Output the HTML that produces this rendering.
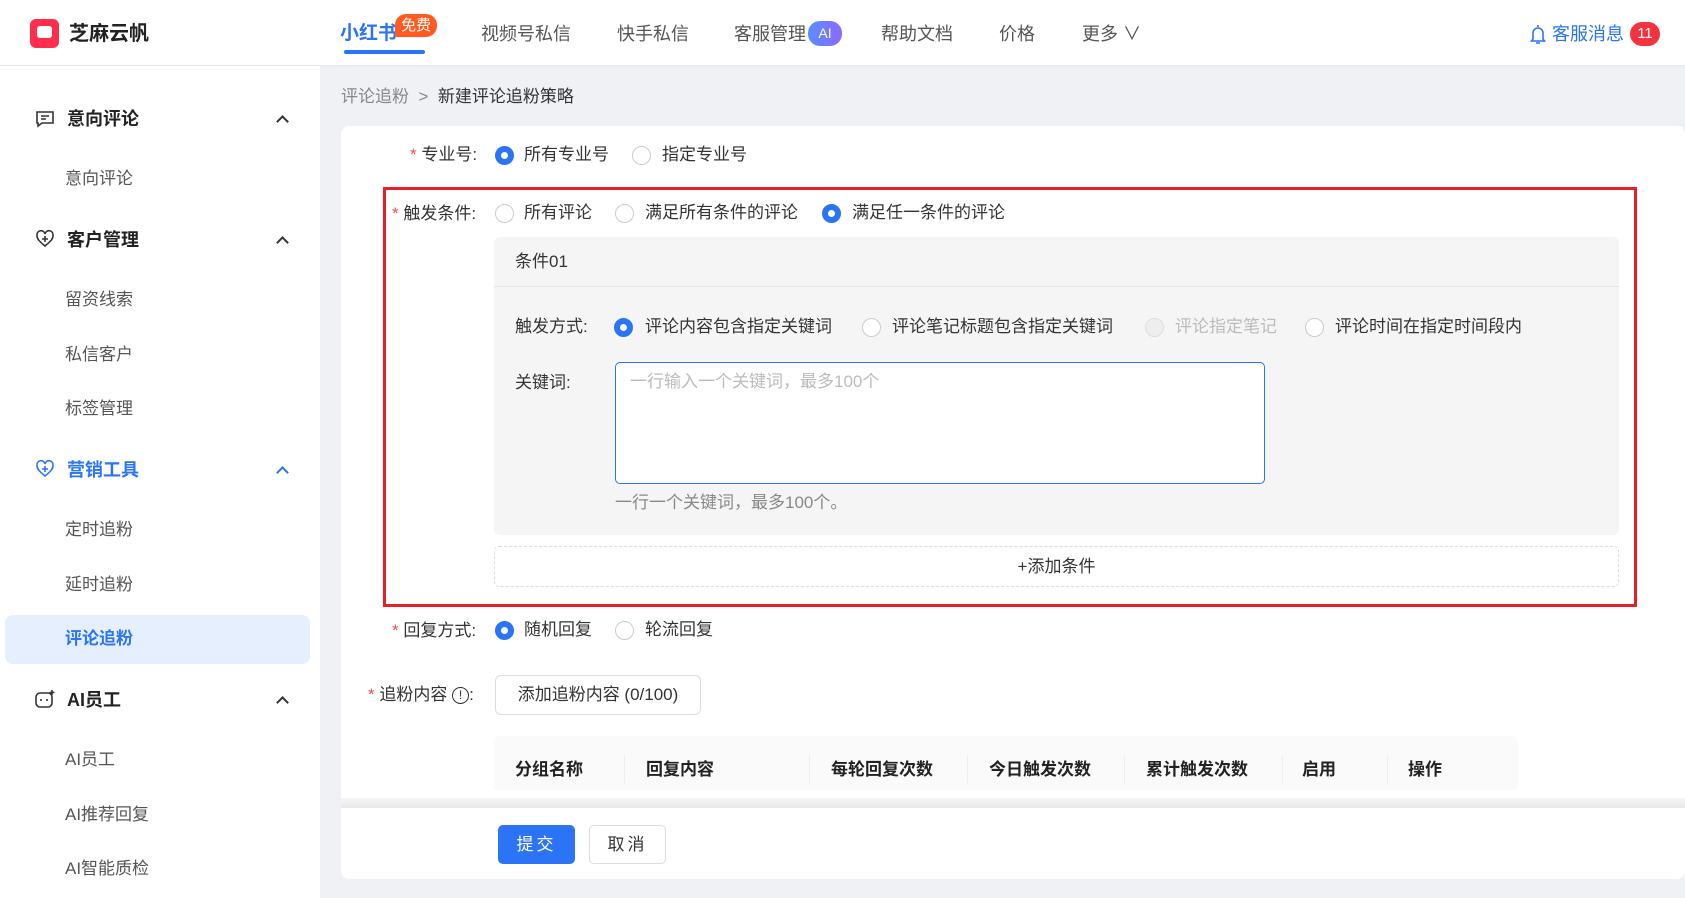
<!DOCTYPE html><html><head><meta charset="utf-8"><style>
*{margin:0;padding:0;box-sizing:border-box}
body{width:1685px;height:898px;overflow:hidden;background:#f0f1f5;font-family:"Liberation Sans","Noto Sans CJK SC",sans-serif;font-size:17px;color:#333;position:relative}
.a{position:absolute;white-space:nowrap;line-height:24px}
.hdr{position:absolute;left:0;top:0;width:1685px;height:66px;background:#fff;border-bottom:1px solid #e5e6eb}
.side{position:absolute;left:0;top:66px;width:320px;height:832px;background:#fff}
.g{font-weight:bold;color:#222;font-size:18px}
.sub{color:#555}
.r{position:absolute;width:19px;height:19px;border-radius:50%;border:1px solid #ccc;background:#fff}
.r.on{border:6px solid #2a74f5}
.r.dis{background:#eee;border-color:#ddd}
.star{color:#f04c4c}
.chev{position:absolute;width:9px;height:9px;border-left:2px solid #333;border-top:2px solid #333;transform:rotate(45deg)}
</style></head><body>
<div class="hdr"></div>
<div class="a" style="left:30px;top:19px;width:29px;height:29px;background:#ff2e4d;border-radius:6px;"></div>
<div class="a" style="left:37px;top:26px;width:15px;height:12px;background:#fff;border-radius:3px"></div>
<div class="a" style="left:69px;top:22px;font-size:20px;font-weight:bold;color:#222">芝麻云帆</div>
<div class="a" style="left:340px;top:22px;font-size:19px;font-weight:bold;color:#2a74f5">小红书</div>
<div class="a" style="left:344px;top:50px;width:81px;height:4px;background:#2a74f5;border-radius:2px"></div>
<div class="a" style="left:395px;top:14px;padding:0 6px;height:23px;line-height:23px;background:#ff5a1f;color:#fff;border-radius:11px 11px 11px 2px;font-size:15px">免费</div>
<div class="a" style="left:481px;top:22px;font-size:18px;color:#555">视频号私信</div>
<div class="a" style="left:617px;top:22px;font-size:18px;color:#555">快手私信</div>
<div class="a" style="left:734px;top:22px;font-size:18px;color:#555">客服管理</div>
<div class="a" style="left:808px;top:21px;width:34px;height:25px;border-radius:12px;background:linear-gradient(90deg,#5b8cff,#8a6bff);color:#fff;font-size:14px;text-align:center;line-height:25px">AI</div>
<div class="a" style="left:881px;top:22px;font-size:18px;color:#555">帮助文档</div>
<div class="a" style="left:999px;top:22px;font-size:18px;color:#555">价格</div>
<div class="a" style="left:1082px;top:22px;font-size:18px;color:#555">更多 ∨</div>
<svg class="a" style="left:1530px;top:23px" width="16" height="22" viewBox="0 0 16 22"><path d="M8 2v2M3 16V10a5 5 0 0 1 10 0v6l1.5 2h-13zM6 20h4" fill="none" stroke="#2a74f5" stroke-width="1.6"/></svg>
<div class="a" style="left:1552px;top:22px;font-size:18px;color:#2a74f5">客服消息</div>
<div class="a" style="left:1630px;top:22px;width:30px;height:24px;border-radius:12px;background:#f5333f;color:#fff;text-align:center;font-size:15px">11</div>

<div class="side"></div>
<svg class="a" style="left:35px;top:110px" width="20" height="18" viewBox="0 0 20 18"><path d="M2 2h16v11H7l-4 3v-3H2z M6 6h8M6 9h5" fill="none" stroke="#333" stroke-width="1.6"/></svg>
<div class="a g" style="left:67px;top:107px">意向评论</div><div class="chev" style="left:278px;top:117px"></div>
<div class="a sub" style="left:65px;top:167px">意向评论</div>
<svg class="a" style="left:35px;top:229px" width="20" height="20" viewBox="0 0 20 20"><path d="M10 17C4 12 2 10 2 6.5A4 4 0 0 1 10 5a4 4 0 0 1 8 1.5C18 10 16 12 10 17zM10 7v6M7 10h6" fill="none" stroke="#333" stroke-width="1.6"/></svg>
<div class="a g" style="left:67px;top:228px">客户管理</div><div class="chev" style="left:278px;top:238px"></div>
<div class="a sub" style="left:65px;top:288px">留资线索</div>
<div class="a sub" style="left:65px;top:343px">私信客户</div>
<div class="a sub" style="left:65px;top:397px">标签管理</div>
<svg class="a" style="left:35px;top:459px" width="20" height="20" viewBox="0 0 20 20"><path d="M10 17C4 12 2 10 2 6.5A4 4 0 0 1 10 5a4 4 0 0 1 8 1.5C18 10 16 12 10 17zM10 7v6M7 10h6" fill="none" stroke="#2a74f5" stroke-width="1.6"/></svg>
<div class="a g" style="left:67px;top:458px;color:#2a74f5">营销工具</div><div class="chev" style="left:278px;top:468px;border-color:#2a74f5"></div>
<div class="a sub" style="left:65px;top:518px">定时追粉</div>
<div class="a sub" style="left:65px;top:573px">延时追粉</div>
<div class="a" style="left:5px;top:615px;width:305px;height:49px;background:#e6effe;border-radius:8px"></div>
<div class="a" style="left:65px;top:627px;color:#2a74f5;font-weight:bold">评论追粉</div>
<svg class="a" style="left:34px;top:689px" width="22" height="20" viewBox="0 0 22 20"><rect x="2" y="4" width="16" height="14" rx="4" fill="none" stroke="#333" stroke-width="1.6"/><path d="M7 10v2M13 10v2M18 1v5M15.5 3.5h5" stroke="#333" stroke-width="1.6"/></svg>
<div class="a g" style="left:67px;top:688px">AI员工</div><div class="chev" style="left:278px;top:698px"></div>
<div class="a sub" style="left:65px;top:748px">AI员工</div>
<div class="a sub" style="left:65px;top:803px">AI推荐回复</div>
<div class="a sub" style="left:65px;top:857px">AI智能质检</div>

<div class="a" style="left:341px;top:85px;color:#888">评论追粉 &nbsp;&gt;&nbsp; <span style="color:#333">新建评论追粉策略</span></div>
<div class="a" style="left:341px;top:126px;width:1344px;height:753px;background:#fff;border-radius:8px"></div>

<div class="a" style="left:410px;top:143px"><span class="star">* </span>专业号:</div>
<div class="r on" style="left:495px;top:146px"></div><div class="a" style="left:524px;top:143px">所有专业号</div>
<div class="r" style="left:632px;top:146px"></div><div class="a" style="left:662px;top:143px">指定专业号</div>

<div class="a" style="left:383px;top:187px;width:1254px;height:420px;border:3px solid #e5202a"></div>
<div class="a" style="left:392px;top:202px"><span class="star">* </span>触发条件:</div>
<div class="r" style="left:495px;top:204px"></div><div class="a" style="left:524px;top:201px">所有评论</div>
<div class="r" style="left:615px;top:204px"></div><div class="a" style="left:645px;top:201px">满足所有条件的评论</div>
<div class="r on" style="left:822px;top:204px"></div><div class="a" style="left:852px;top:201px">满足任一条件的评论</div>

<div class="a" style="left:494px;top:237px;width:1125px;height:298px;background:#f5f5f5;border-radius:6px"></div>
<div class="a" style="left:494px;top:286px;width:1125px;height:1px;background:#e4e4e4"></div>
<div class="a" style="left:515px;top:250px">条件01</div>
<div class="a" style="left:515px;top:315px">触发方式:</div>
<div class="r on" style="left:614px;top:318px"></div><div class="a" style="left:645px;top:315px">评论内容包含指定关键词</div>
<div class="r" style="left:862px;top:318px"></div><div class="a" style="left:892px;top:315px">评论笔记标题包含指定关键词</div>
<div class="r dis" style="left:1145px;top:318px"></div><div class="a" style="left:1175px;top:315px;color:#bbb">评论指定笔记</div>
<div class="r" style="left:1305px;top:318px"></div><div class="a" style="left:1335px;top:315px">评论时间在指定时间段内</div>
<div class="a" style="left:515px;top:371px">关键词:</div>
<div class="a" style="left:615px;top:362px;width:650px;height:122px;background:#fff;border:1px solid #2a74f5;border-radius:5px"></div>
<div class="a" style="left:630px;top:370px;color:#bbb">一行输入一个关键词，最多100个</div>
<div class="a" style="left:615px;top:491px;color:#888">一行一个关键词，最多100个。</div>
<div class="a" style="left:494px;top:546px;width:1125px;height:41px;border:1px dashed #ddd;border-radius:5px;text-align:center;line-height:39px;color:#333">+添加条件</div>

<div class="a" style="left:392px;top:619px"><span class="star">* </span>回复方式:</div>
<div class="r on" style="left:495px;top:621px"></div><div class="a" style="left:524px;top:618px">随机回复</div>
<div class="r" style="left:615px;top:621px"></div><div class="a" style="left:645px;top:618px">轮流回复</div>

<div class="a" style="left:368px;top:683px"><span class="star">* </span>追粉内容 <span style="display:inline-block;width:17px;height:17px;border:1.5px solid #333;border-radius:50%;font-size:12px;line-height:14px;text-align:center;vertical-align:1px">!</span>:</div>
<div class="a" style="left:495px;top:675px;width:206px;height:40px;border:1px solid #ddd;border-radius:6px;text-align:center;line-height:38px">添加追粉内容 (0/100)</div>

<div class="a" style="left:494px;top:736px;width:1024px;height:54px;background:#fafafa;border-radius:6px 6px 0 0"></div>
<div class="a" style="left:515px;top:758px;font-weight:bold;color:#222">分组名称</div>
<div class="a" style="left:646px;top:758px;font-weight:bold;color:#222">回复内容</div>
<div class="a" style="left:831px;top:758px;font-weight:bold;color:#222">每轮回复次数</div>
<div class="a" style="left:989px;top:758px;font-weight:bold;color:#222">今日触发次数</div>
<div class="a" style="left:1146px;top:758px;font-weight:bold;color:#222">累计触发次数</div>
<div class="a" style="left:1302px;top:758px;font-weight:bold;color:#222">启用</div>
<div class="a" style="left:1408px;top:758px;font-weight:bold;color:#222">操作</div>
<div class="a" style="left:624px;top:755px;width:1px;height:28px;background:#eee"></div>
<div class="a" style="left:809px;top:755px;width:1px;height:28px;background:#eee"></div>
<div class="a" style="left:967px;top:755px;width:1px;height:28px;background:#eee"></div>
<div class="a" style="left:1124px;top:755px;width:1px;height:28px;background:#eee"></div>
<div class="a" style="left:1282px;top:755px;width:1px;height:28px;background:#eee"></div>
<div class="a" style="left:1387px;top:755px;width:1px;height:28px;background:#eee"></div>
<div class="a" style="left:341px;top:798px;width:1344px;height:10px;background:linear-gradient(#f6f6f6,#e8e8e8)"></div>

<div class="a" style="left:498px;top:825px;width:77px;height:39px;background:#2a74f5;border-radius:5px;color:#fff;text-align:center;line-height:39px;letter-spacing:3px">提交</div>
<div class="a" style="left:589px;top:825px;width:77px;height:39px;border:1px solid #ddd;border-radius:5px;text-align:center;line-height:37px;letter-spacing:3px">取消</div>
</body></html>
